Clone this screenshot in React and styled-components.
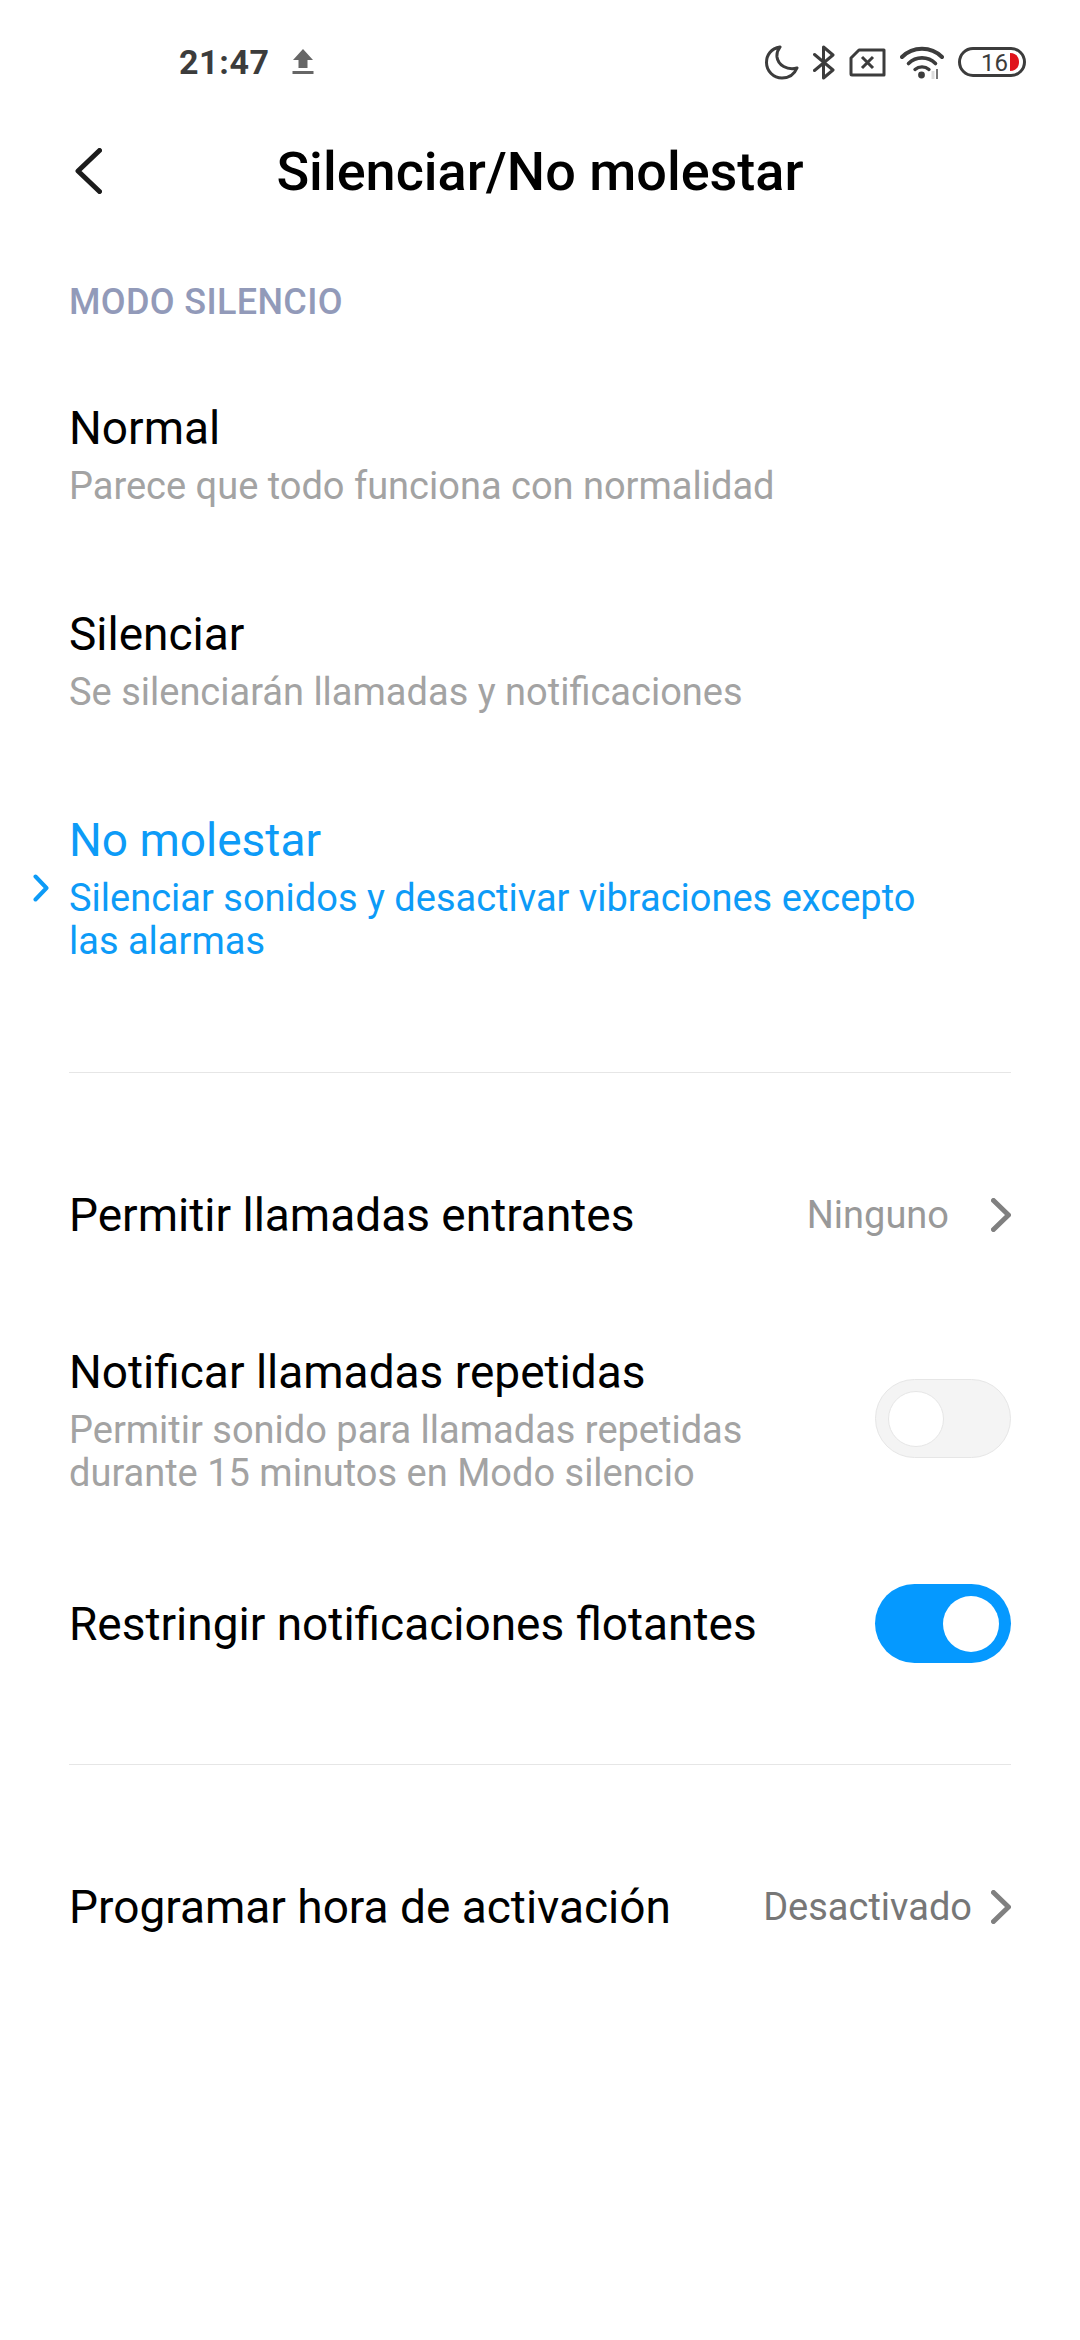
import styled, { createGlobalStyle } from "styled-components";

const BLUE = "#0d9bf7";

const GlobalStyle = createGlobalStyle`
  html, body {
    margin: 0;
    padding: 0;
    background: #fff;
  }
  body {
    font-family: Roboto, "Noto Sans", sans-serif;
    -webkit-font-smoothing: antialiased;
  }
`;

const Page = styled.div`
  width: 1080px;
  height: 2340px;
  background: #fff;
  overflow: hidden;
`;

const StatusBar = styled.div`
  height: 124px;
  display: flex;
  align-items: center;
  padding: 0 54px 0 179px;
  color: #3c3c3c;
`;

const Clock = styled.span`
  font-size: 34px;
  font-weight: 700;
  letter-spacing: 0.6px;
  width: 113px;
`;

const StatusIcons = styled.div`
  margin-left: auto;
  display: flex;
  align-items: center;
  gap: 14px;
`;

const Header = styled.header`
  height: 94px;
  display: grid;
  grid-template-columns: 69px 1fr 69px;
  align-items: center;
  padding: 0 69px;
`;

const BackSlot = styled.div`
  display: flex;
  padding-left: 6px;
`;

const Title = styled.h1`
  margin: 0;
  font-size: 54px;
  font-weight: 500;
  color: #000;
  text-align: center;
  white-space: nowrap;
`;

const SectionLabel = styled.div`
  margin-top: 61px;
  padding-left: 69px;
  font-size: 36px;
  letter-spacing: 0.35px;
  line-height: 46px;
  font-weight: 500;
  color: #929ab9;
`;

const Options = styled.div`
  margin-top: 22px;
  display: flex;
  flex-direction: column;
`;

const Option = styled.div`
  display: grid;
  grid-template-columns: 69px 1fr;
  padding: 45px 0 46px;
  color: ${(p) => (p.$active ? BLUE : "#000")};
`;

const Marker = styled.div`
  display: flex;
  align-items: center;
  justify-content: flex-end;
  padding: 9px 20px 0 0;
`;

const OptionTitle = styled.div`
  font-size: 46px;
  line-height: 72px;
`;

const Sub = styled.div`
  font-size: 38px;
  line-height: 43px;
  padding-top: 1px;
  margin-bottom: -1px;
  color: ${(p) => (p.$active ? BLUE : "#a3a3a3")};
  max-width: ${(p) => p.$wrap}px;
`;

const Divider = styled.div`
  height: 1px;
  margin: ${(p) => p.$top}px 69px 0;
  background: #e6e6e6;
`;

const Row = styled.div`
  display: flex;
  align-items: ${(p) => p.$align || "center"};
  justify-content: space-between;
  padding: 0 69px;
  margin-top: ${(p) => p.$top}px;
`;

const RowTitle = styled.div`
  font-size: 46px;
  line-height: 72px;
  color: #000;
`;

const Value = styled.div`
  display: flex;
  align-items: center;
  font-size: 38px;
  color: ${(p) => (p.$dark ? "#777" : "#999")};
  gap: ${(p) => p.$gap}px;
`;

const Toggle = styled.div`
  flex: none;
  box-sizing: border-box;
  width: 136px;
  height: 79px;
  margin-top: ${(p) => p.$top || 0}px;
  border-radius: 40px;
  display: flex;
  align-items: center;
  padding: 0 12px;
  justify-content: ${(p) => (p.$on ? "flex-end" : "flex-start")};
  background: ${(p) => (p.$on ? "#0599ff" : "#f4f4f4")};
  border: ${(p) => (p.$on ? "none" : "1px solid #e6e6e6")};
`;

const Knob = styled.div`
  box-sizing: border-box;
  width: 56px;
  height: 56px;
  border-radius: 50%;
  background: #fff;
  border: ${(p) => (p.$on ? "none" : "1px solid #e6e6e6")};
`;

const UploadIcon = () => (
  <svg width="22" height="26" viewBox="0 0 22 26">
    <path d="M11 0 L21 11 H15.5 V19 H6.5 V11 H1 Z" fill="#666" />
    <rect x="0.5" y="22" width="21" height="3" fill="#666" />
  </svg>
);

const MoonIcon = () => (
  <svg width="34" height="35" viewBox="0 0 34 35" fill="none">
    <path
      d="M15 2 C6 3.5 1.5 10 1.5 17.5 C1.5 26 8.5 33 17 33 C24 33 29.5 29 32 23 C22 25.5 13 20 12 12 C11.6 8 13 4.5 15 2 Z"
      stroke="#3c3c3c"
      strokeWidth="3"
      strokeLinejoin="round"
    />
  </svg>
);

const BluetoothIcon = () => (
  <svg width="22" height="35" viewBox="0 0 22 35" fill="none">
    <path
      d="M1.5 9.5 L20 25 L10.5 33 V2 L20 10 L1.5 25.5"
      stroke="#3c3c3c"
      strokeWidth="3"
      strokeLinejoin="round"
      strokeLinecap="round"
    />
  </svg>
);

const SimIcon = () => (
  <svg width="37" height="29" viewBox="0 0 37 29" fill="none">
    <path
      d="M10 2 H35 V27 H3 Q2 27 2 26 V10 Z"
      stroke="#3c3c3c"
      strokeWidth="3"
      strokeLinejoin="round"
    />
    <path d="M13 9 L24 20 M24 9 L13 20" stroke="#3c3c3c" strokeWidth="3" />
  </svg>
);

const WifiIcon = () => (
  <svg width="44" height="33" viewBox="0 0 44 33" fill="none">
    <path d="M2 11 C13 0 31 0 42 11" stroke="#3c3c3c" strokeWidth="4" strokeLinecap="round" />
    <path d="M8.5 17.5 C16 10 28 10 35.5 17.5" stroke="#3c3c3c" strokeWidth="3.6" strokeLinecap="round" />
    <path d="M15 23.5 C19 20 25 20 29 23.5" stroke="#3c3c3c" strokeWidth="3.4" strokeLinecap="round" />
    <circle cx="21.5" cy="29" r="3.4" fill="#3c3c3c" />
    <path d="M33 25 V33" stroke="#dcdcdc" strokeWidth="3" />
    <path d="M37 23 V33" stroke="#777" strokeWidth="2" />
  </svg>
);

const BatteryIcon = () => (
  <svg width="68" height="30" viewBox="0 0 68 30" fill="none">
    <rect x="1.5" y="1.5" width="65" height="27" rx="13.5" stroke="#3c3c3c" strokeWidth="3" />
    <path d="M52 6 C58 6 61 10 61 15 C61 20 58 24 52 24 Z" fill="#e0141c" />
    <text x="23" y="24" fontFamily="Roboto, sans-serif" fontSize="24" fill="#3c3c3c">
      16
    </text>
  </svg>
);

const BackIcon = () => (
  <svg width="27" height="46" viewBox="0 0 27 46" fill="none">
    <path d="M24.5 2.5 L3 23 L24.5 43.5" stroke="#1c1c1c" strokeWidth="5" strokeLinecap="round" strokeLinejoin="round" />
  </svg>
);

const Chevron = ({ color, width, height, strokeWidth }) => (
  <svg width={width} height={height} viewBox={`0 0 ${width} ${height}`} fill="none">
    <path
      d={`M2.5 2.5 L${width - 2.5} ${height / 2} L2.5 ${height - 2.5}`}
      stroke={color}
      strokeWidth={strokeWidth}
      strokeLinecap="round"
      strokeLinejoin="round"
    />
  </svg>
);

export default function App() {
  return (
    <Page>
      <GlobalStyle />
      <StatusBar>
        <Clock>21:47</Clock>
        <UploadIcon />
        <StatusIcons>
          <MoonIcon />
          <BluetoothIcon />
          <SimIcon />
          <WifiIcon />
          <BatteryIcon />
        </StatusIcons>
      </StatusBar>

      <Header>
        <BackSlot>
          <BackIcon />
        </BackSlot>
        <Title>Silenciar/No molestar</Title>
      </Header>

      <SectionLabel>MODO SILENCIO</SectionLabel>

      <Options>
        <Option>
          <span />
          <div>
            <OptionTitle>Normal</OptionTitle>
            <Sub>Parece que todo funciona con normalidad</Sub>
          </div>
        </Option>
        <Option>
          <span />
          <div>
            <OptionTitle>Silenciar</OptionTitle>
            <Sub>Se silenciarán llamadas y notificaciones</Sub>
          </div>
        </Option>
        <Option $active>
          <Marker>
            <Chevron color={BLUE} width={16} height={28} strokeWidth={4} />
          </Marker>
          <div>
            <OptionTitle>No molestar</OptionTitle>
            <Sub $active $wrap={860}>
              Silenciar sonidos y desactivar vibraciones excepto las alarmas
            </Sub>
          </div>
        </Option>
      </Options>

      <Divider $top={64} />

      <Row $top={106}>
        <RowTitle>Permitir llamadas entrantes</RowTitle>
        <Value $gap={42}>
          Ninguno
          <Chevron color="#808080" width={20} height={34} strokeWidth={5} />
        </Value>
      </Row>

      <Row $top={85} $align="flex-start">
        <div>
          <RowTitle>Notificar llamadas repetidas</RowTitle>
          <Sub $wrap={760}>Permitir sonido para llamadas repetidas durante 15 minutos en Modo silencio</Sub>
        </div>
        <Toggle $top={43}>
          <Knob />
        </Toggle>
      </Row>

      <Row $top={90}>
        <RowTitle>Restringir notificaciones flotantes</RowTitle>
        <Toggle $on>
          <Knob $on />
        </Toggle>
      </Row>

      <Divider $top={101} />

      <Row $top={106}>
        <RowTitle>Programar hora de activación</RowTitle>
        <Value $dark $gap={19}>
          Desactivado
          <Chevron color="#808080" width={20} height={34} strokeWidth={5} />
        </Value>
      </Row>
    </Page>
  );
}
